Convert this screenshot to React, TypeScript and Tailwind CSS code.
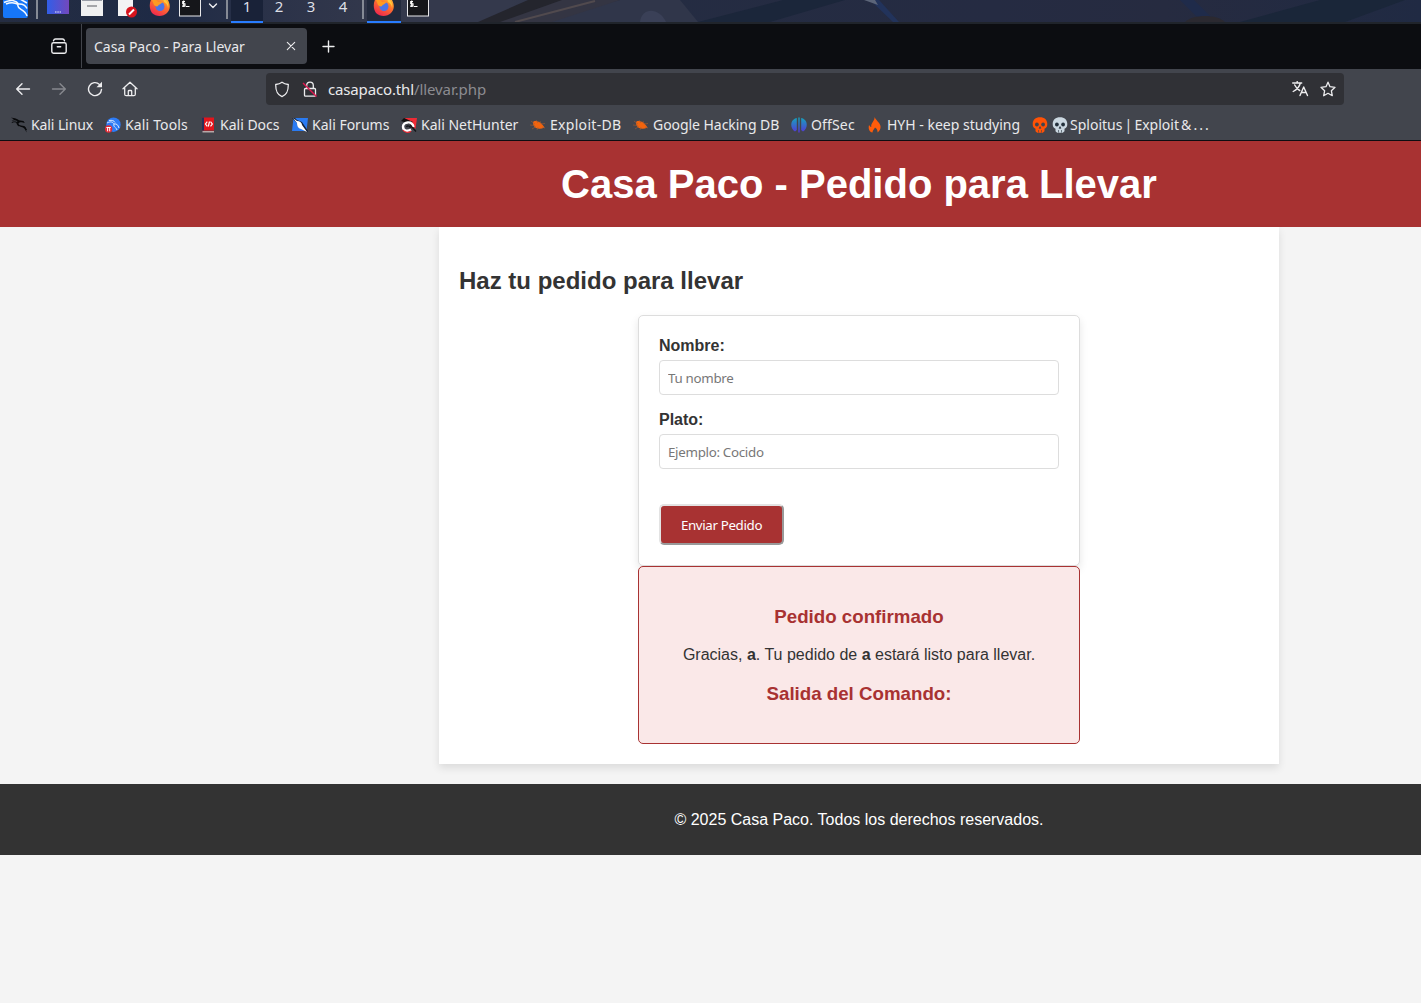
import React from 'react';

const Firefox = () => (
  <svg width="22" height="22" viewBox="0 0 22 22" className="shrink-0">
    <defs>
      <linearGradient id="ff" x1="0.8" y1="0" x2="0.3" y2="1">
        <stop offset="0" stopColor="#ffd43a" />
        <stop offset="0.45" stopColor="#ff7a2a" />
        <stop offset="1" stopColor="#f0264f" />
      </linearGradient>
    </defs>
    <path d="M3 4c1-1 1.500-2 2-3l2 3 5-4c2 2 5 2 7 6 3 6 2 10-1 13-4 4-11 4-15 0C0 15 0 8 3 4Z" fill="url(#ff)" />
    <circle cx="11" cy="12.500" r="4.500" fill="#4b74e8" />
    <path d="M3 6c3-1 5 0 6 2h4c0 2-3 2-4 4-1 1-3 0-4-1Z" fill="#ff9a22" />
    <path d="M14 4c4 2 6 6 5 10 0-3-2-5-4-6Z" fill="#ffc93a" />
  </svg>
);

const Terminal = () => (
  <svg width="22" height="22" viewBox="0 0 22 22" className="shrink-0">
    <rect x="0.500" y="0.500" width="21" height="20.500" fill="#15161a" stroke="#e8e8ea" />
    <path d="M6 6.500H3.700v2.300H6v2.300H3M4.700 5.500v6.500M7 11.500h3.500" fill="none" stroke="#fff" strokeWidth="1.100" />
  </svg>
);

const Dragon = () => (
  <svg width="16" height="16" viewBox="0 0 16 16">
    <path d="M0 .7c3-.2 6 .8 8 2.500L12.500 4l1.300 2-3-.7C8 5 6.500 6.500 8.500 8c2 1.200 5-.2 6.500 3l.5 4.500c-1-2-1.500-4-3.500-5-2-.8-5-.5-6-3C5 6 5.500 5 6.500 4.200 4.500 3 2.500 3.300.5 3.800L3 2.300Z" fill="#08090b" />
    <path d="M.8 5.500C3 4.500 4.500 4.700 6 5.500M13 10c1.700 1 2.500 2 2.500 3" fill="none" stroke="#08090b" />
  </svg>
);
const Tools = () => (
  <svg width="16" height="16" viewBox="0 0 16 16">
    <circle cx="8.500" cy="7.700" r="7.200" fill="#2d7bf5" />
    <path d="M2 6c4-2 6-1 7 1 3-.5 4 1 5 4M4 3.500c3-.5 5 0 6 2M9 7c-1 3 2 3 3 6" fill="none" stroke="#dbe9ff" strokeWidth="1" />
    <circle cx="3.600" cy="12" r="3.700" fill="#e02b36" />
    <path d="M1.400 10.500h4.400M2.600 10.500v3.800M4.700 10.500v3.800" stroke="#fff" fill="none" />
  </svg>
);
const Docs = () => (
  <svg width="16" height="16" viewBox="0 0 16 16">
    <path d="M2 .5h12v13H2z" fill="#e3151c" />
    <path d="M2 .5h2v13H2z" fill="#28305a" />
    <path d="M2.500 14h11.500v1.500H2.500z" fill="#b7a9a9" />
    <path d="M7.300 4.700 5.500 7l1.800 2.300M9.500 4.500 8.300 9.500M10.500 4.700 12.300 7l-1.800 2.300" fill="none" stroke="#fff" strokeWidth="1.200" />
  </svg>
);
const Forums = () => (
  <svg width="16" height="16" viewBox="0 0 16 16">
    <path d="M1.500 1H16l-1.500 13H0Z" fill="#2a7bf2" />
    <path d="M0 1h3l2 2 5 2 6 9v1l-4-2-6-3-1-4Z" fill="#14223b" />
    <path d="m1 1 4 3c3 0 5 2 5 4l5 7-6-3c-3-.5-4-3-4-6Z" fill="#fff" />
  </svg>
);
const NetHunter = () => (
  <svg width="16" height="16" viewBox="0 0 16 16">
    <path d="M3 1h13l-1.500 11-4-4Z" fill="#ee2b35" />
    <path d="m0 4 3-3 9 4-4 2-5-2Z" fill="#111" />
    <path d="M12.500 10C11 3 2 5 2 9.500c0 5 5 5 8 3" fill="none" stroke="#fff" strokeWidth="2.400" />
    <path d="m9 8 6 6.500M5.500 10c1-2 3-1 4 1" fill="none" stroke="#131316" strokeWidth="1.300" />
    <path d="M2 13c2 3 6 3 8 1" stroke="#ee2b35" strokeWidth="1.200" fill="none" />
  </svg>
);
const Bug = () => (
  <svg width="16" height="16" viewBox="0 0 16 16">
    <path d="M3 5.500C3 3.500 7 3.500 10 5.500c2 1 3 3 4.500 5-3 1.500-6 1.800-8.500.5C4 10 3 8 3 5.500Z" fill="#f2640e" />
    <path d="m1 4 4 3M0 8l5 .5M2 12l4-2.500M6 3l2 3M10 4l1 3M11 7l4-.5M12 10l3 1M8 10l-1 3" stroke="#a65a30" strokeWidth=".6" />
  </svg>
);
const OffSec = () => (
  <svg width="16" height="16" viewBox="0 0 16 16">
    <defs>
      <linearGradient id="os" x1="0" y1="0" x2="0" y2="1">
        <stop stopColor="#14a5bd" />
        <stop offset="1" stopColor="#5536d8" />
      </linearGradient>
    </defs>
    <path d="M5.800 1v12L4 14.500C-1 11-1 4 4 1.500Zm4.400 0v12l1.800 1.500c5-3.500 5-10.500 0-13ZM7.300.5h1.400v15H7.300z" fill="url(#os)" />
  </svg>
);
const Flame = () => (
  <svg width="16" height="16" viewBox="0 0 16 16">
    <path d="M7.500 0c1 3 5 5 6 9 .5 3-1 5-3 6.500.3-2-.5-4-2.500-5C7.500 12 5.500 13 5.500 15.500 2.500 15 1 12 2 8c1 1 1.300 2 2.300 2C3.500 6 8 4 7.500 0Z" fill="#ff5c0a" />
  </svg>
);
const Skull = ({ fill, hole }: { fill: string; hole: string }) => (
  <svg width="16" height="16" viewBox="0 0 16 16" className="shrink-0">
    <path d="M8 .3c4.500 0 7.300 2.700 7.300 6.700 0 2.500-.8 4-2.800 4.800v2.500L10.800 15.700H5.200L3.500 14.300v-2.500C1.500 11 .7 9.500.7 7 .7 3 3.500.3 8 .3Z" fill={fill} />
    <circle cx="4.900" cy="7.500" r="1.900" fill={hole} />
    <circle cx="11.100" cy="7.500" r="1.900" fill={hole} />
    <path d="m8 9.500 1 1.800H7ZM6.500 13v2.500M9.500 13v2.500" fill={hole} stroke={hole} strokeWidth=".6" />
  </svg>
);

type Mark = { icon: React.ReactNode; label: string; w: string };
const marks: Mark[] = [
  { icon: <Dragon />, label: 'Kali Linux', w: 'w-[94px] tracking-[-0.1px]' },
  { icon: <Tools />, label: 'Kali Tools', w: 'w-[95px] tracking-[0.15px]' },
  { icon: <Docs />, label: 'Kali Docs', w: 'w-[92px]' },
  { icon: <Forums />, label: 'Kali Forums', w: 'w-[109px]' },
  { icon: <NetHunter />, label: 'Kali NetHunter', w: 'w-[129px]' },
  { icon: <Bug />, label: 'Exploit-DB', w: 'w-[103px] tracking-[0.3px]' },
  { icon: <Bug />, label: 'Google Hacking DB', w: 'w-[158px] tracking-[-0.05px]' },
  { icon: <OffSec />, label: 'OffSec', w: 'w-[76px] tracking-[0.15px]' },
  { icon: <Flame />, label: 'HYH - keep studying', w: 'w-[165px]' },
];

const line = { fill: 'none', stroke: '#ededef', strokeWidth: 1.4, strokeLinecap: 'round', strokeLinejoin: 'round' } as const;

function Panel() {
  return (
    <div className="relative h-[24px] bg-[#20242b]">
      <svg className="absolute left-0 top-0" width="1421" height="22" viewBox="0 0 1421 22">
        <defs>
          <linearGradient id="wall">
            <stop stopColor="#252d42" />
            <stop offset=".11" stopColor="#1e2a45" />
            <stop offset=".2" stopColor="#2c3349" />
            <stop offset=".28" stopColor="#34394c" />
            <stop offset=".36" stopColor="#34394c" />
            <stop offset=".44" stopColor="#242c42" />
            <stop offset=".7" stopColor="#252b42" />
            <stop offset=".82" stopColor="#262b40" />
            <stop offset="1" stopColor="#202a43" />
          </linearGradient>
        </defs>
        <path d="M0 0h1421v22H0z" fill="url(#wall)" />
        <path d="M540 22 620 0h60l18 22Z" fill="#30364a" />
        <path d="m478 22 50-22h38l-62 22Z" fill="#24252d" />
        <path d="m500 22 62-22h58l-68 22Z" fill="#343543" />
        <path d="m515 22 80-21" stroke="#514a4e" strokeWidth="2" />
        <path d="M640 22c2-16 20-14 26 0Z" fill="#3a4057" />
        <path d="m698 22 85-22h62l-75 22Z" fill="#1b263a" />
        <path d="m870 0h9l20 22h-6Z" fill="#22335b" />
        <path d="m864 0h11l3 5Z" fill="#5c6579" />
        <path d="m1180 0 22 22h14L1194 0Z" fill="#1f2b4a" />
        <path d="M1185 22c8-8 32-8 40 0Z" fill="#2b2930" />
        <path d="m1240 22 80-22h85l-60 22Z" fill="#1a2639" />
      </svg>
      <div className="relative flex h-[23px] items-start font-['Noto_Sans'] text-[15px] text-[#dddfe5]">
        <svg width="28" height="18" viewBox="0 0 28 18" className="ml-[3px] shrink-0">
          <rect y="-7" width="25" height="25" rx="2" fill="#1676f8" />
          <path d="M1 2.500c6-3 12-2.500 14.500 1.500 5-.5 7 1.500 8.500 4.500M3 4c5-2 9-1.500 12 .500-2 5 7 4 9 11.500M17-1l7 4" stroke="#f5faff" strokeWidth="1.500" fill="none" />
        </svg>
        <i className="ml-[5px] h-[19px] w-[2px] bg-[#858a95]" />
        <svg width="22" height="14" className="ml-[9px]">
          <defs><linearGradient id="desk"><stop stopColor="#315ee8" /><stop offset="1" stopColor="#7348bd" /></linearGradient></defs>
          <path d="M0 0h22v14H0z" fill="url(#desk)" /><path d="M8 12h6" stroke="#e6eaff" strokeWidth="1.200" strokeDasharray="1.500 .8" />
        </svg>
        <svg width="22" height="16" className="ml-[12px]">
          <path d="M0 0h22v16H0z" fill="#f0f0f1" /><path d="M1 0h20v1H1z" fill="#999da7" /><path d="M6 5h10v2H6z" fill="#a4a5a9" />
        </svg>
        <svg width="22" height="18" className="ml-[14px]">
          <path d="M1 0h15v16H1z" fill="#f3f3f4" /><circle cx="14.500" cy="12" r="5.500" fill="#d7141d" /><path d="m12 14.500 5-5" stroke="#fff" strokeWidth="2" />
        </svg>
        <div className="-mt-[6px] ml-[10px]"><Firefox /></div>
        <div className="-mt-[5px] ml-[8px]"><Terminal /></div>
        <svg width="10" height="10" className="ml-[7px]"><path d="m1.500 4 3.500 3.500L8.500 4" {...line} /></svg>
        <i className="ml-[8px] h-[19px] w-[2px] bg-[#858a95]" />
        <div className="ml-[3px] flex h-[23px] leading-[12px]">
          <span className="w-8 border-b-2 border-[#287cff] bg-[#192238] text-center">1</span>
          <span className="w-8 text-center">2</span>
          <span className="w-8 text-center">3</span>
          <span className="w-8 text-center">4</span>
        </div>
        <i className="ml-[3px] h-[19px] w-[2px] bg-[#858a95]" />
        <div className="ml-[3px] flex h-[23px] w-[34px] justify-center border-b-2 border-[#287cff] bg-[#222a3d]">
          <div className="-mt-[6px]"><Firefox /></div>
        </div>
        <div className="-mt-[5px] ml-[6px]"><Terminal /></div>
      </div>
    </div>
  );
}

function Browser() {
  return (
    <div className="font-['Noto_Sans',sans-serif] text-[#e9e9eb]">
      <div className="flex h-[45px] items-center bg-[#0c0d11] pb-px">
        <div className="flex h-[44px] w-[82px] items-center border-r border-[#42444b] pl-[50px]">
          <svg width="18" height="18" viewBox="0 0 18 18"><path d="M3.500 3.800q.5-1.800 2-1.800h7q1.500 0 2 1.800M3.500 5.700h11q1.700 0 1.700 1.700v7.100q0 1.700-1.700 1.700h-11q-1.700 0-1.700-1.700V7.400q0-1.700 1.700-1.700ZM7.300 9.700h3.400" {...line} /></svg>
        </div>
        <div className="ml-1 flex h-9 w-[221px] items-center justify-between rounded bg-[#42454d] pl-2 pr-[11px]">
          <span className="whitespace-nowrap pt-px text-[14px]">Casa Paco - Para Llevar</span>
          <svg width="10" height="10"><path d="m1.300 1.300 7.400 7.400M8.700 1.300 1.300 8.700" {...line} strokeWidth="1.100" /></svg>
        </div>
        <svg width="14" height="14" className="ml-[14px]"><path d="M7.500 2v11M2 7.500h11" {...line} /></svg>
      </div>
      <div className="flex h-10 items-center bg-[#42454d]">
        <div className="flex w-[266px] gap-5 pl-[15px]">
          <svg width="16" height="16"><path d="M14.500 8H1.700M7 2.700 1.700 8 7 13.300" {...line} /></svg>
          <svg width="16" height="16" className="opacity-40"><path d="M1.500 8h12.800M9 2.700 14.300 8 9 13.300" {...line} /></svg>
          <svg width="16" height="16"><path d="M14.500 8.500A6.500 6.500 0 1 1 12.500 3.400" {...line} /><path d="M15 .7v5.500H9.500Z" fill="#ededef" /></svg>
          <svg width="16" height="16" className="-ml-px"><path d="M1 7.700 8 1.300l7 6.400M2.700 6.700v6.500q0 1.500 1.500 1.500h7.600q1.500 0 1.500-1.500V6.700M6.300 14.500v-4.200q0-.8.8-.8h1.800q.8 0 .8.800v4.200" {...line} strokeWidth="1.300" /></svg>
        </div>
        <div className="flex h-8 w-[1078px] items-center rounded bg-[#303136] pl-2 pr-2">
          <svg width="16" height="17" viewBox="0 0 16 17"><path d="M8 1.200c2 1.500 4 2 6.300 2.300 0 6-1 10-6.300 12.200C2.700 13.500 1.700 9.500 1.700 3.500 4 3.200 6 2.700 8 1.200Z" {...line} strokeWidth="1.300" /></svg>
          <svg width="16" height="17" className="ml-3"><path d="M4.700 7.500V4.500a3.300 3.300 0 0 1 6.600 0v3M3.500 7.500h9q1 0 1 1v5.700q0 1-1 1h-9q-1 0-1-1V8.500q0-1 1-1Z" {...line} strokeWidth="1.300" /><path d="m1 2 13.500 13.500" stroke="#df174e" strokeWidth="1.400" /></svg>
          <span className="ml-[10px] flex-1 text-[15px] tracking-[-0.15px]">casapaco.thl<span className="tracking-[-0.08px] text-[#8c8c91]">/llevar.php</span></span>
          <svg width="17" height="16" viewBox="0 0 17 16"><path d="M.700 2h9M5.200.5v1.500M8.200 2.500C7.200 6.500 4 9 1.200 10.500M2.700 4c1.500 3 3 4.500 5 5.500M8 14.500l3.700-8.500L15.500 14.500M9.500 11.500h4.500" {...line} /></svg>
          <svg width="16" height="16" viewBox="0 0 16 16" className="ml-[11px]"><path d="m8 1.200 2 4.500 5 .6-3.600 3.500.9 4.900L8 12.300l-4.300 2.400.9-4.900L1 6.300l5-.6Z" {...line} strokeWidth="1.300" /></svg>
        </div>
      </div>
      <div className="flex h-8 items-center whitespace-nowrap border-b border-[#0c0d11] bg-[#42454d] pl-[11px] text-[14px]">
        {marks.map((m) => (
          <div key={m.label} className={`flex shrink-0 items-center gap-1 ${m.w}`}>
            <span className="shrink-0">{m.icon}</span><span>{m.label}</span>
          </div>
        ))}
        <div className="flex items-center gap-1">
          <Skull fill="#ff5206" hole="#42454d" />
          <Skull fill="#cbd8e1" hole="#23303b" />
          <span className="-ml-[2px] [word-spacing:-1.500px]">Sploitus | Exploit &amp; <span className="tracking-[2px] [word-spacing:0px]">...</span></span>
        </div>
      </div>
    </div>
  );
}

const inputCls =
  "block h-[35px] w-[400px] rounded border border-[#ddd] bg-white px-2 font-['Noto_Sans'] text-[13.333px] tracking-[-0.3px] placeholder:text-[#777]";

export default function App() {
  return (
    <div className="h-[1003px] w-[1421px] overflow-hidden bg-[#f4f4f4]">
      <Panel />
      <Browser />
      <div className="w-[1718px] font-['Liberation_Sans',sans-serif] text-base leading-[18px] text-[#333]">
        <header className="flex h-[86px] items-center justify-center bg-[#a83232]">
          <h1 className="text-[40px] font-bold leading-[46px] text-white">Casa Paco - Pedido para Llevar</h1>
        </header>
        <main className="mx-auto mb-5 h-[537px] w-[840px] bg-white px-5 pt-10 shadow-[0_4px_8px_rgba(0,0,0,0.1)]">
          <h2 className="mb-5 text-2xl font-bold leading-7">Haz tu pedido para llevar</h2>
          <form className="mx-auto h-[251px] w-[442px] rounded-[5px] border border-[#ddd] bg-white px-5 pt-[21px] shadow-[0_4px_8px_rgba(0,0,0,0.1)]" onSubmit={(e) => e.preventDefault()}>
            <label className="mb-[5px] block font-bold">Nombre:</label>
            <input className={inputCls} placeholder="Tu nombre" />
            <label className="mb-[5px] mt-[16px] block font-bold">Plato:</label>
            <input className={inputCls} placeholder="Ejemplo: Cocido" />
            <button className="mt-[35px] block h-[41px] w-[125px] rounded-[5px] border-2 border-b-[#999] border-l-[#e3e3e3] border-r-[#999] border-t-[#e3e3e3] bg-[#a83232] font-['Noto_Sans'] text-[13.333px] tracking-[-0.35px] text-white">Enviar Pedido</button>
          </form>
          <section className="relative mx-auto h-[178px] w-[442px] rounded-[5px] border border-[#a83232] bg-[#fae8e8] pt-[39px] text-center">
            <h3 className="text-[18.720px] font-bold leading-[21px] text-[#a83232]">Pedido confirmado</h3>
            <p className="mt-[19px]">Gracias, <b>a</b>. Tu pedido de <b>a</b> estará listo para llevar.</p>
            <h3 className="mt-[19px] text-[18.720px] font-bold leading-[21px] text-[#a83232]">Salida del Comando:</h3>
          </section>
        </main>
        <footer className="flex h-[71px] items-center justify-center bg-[#333] text-white">© 2025 Casa Paco. Todos los derechos reservados.</footer>
      </div>
    </div>
  );
}
